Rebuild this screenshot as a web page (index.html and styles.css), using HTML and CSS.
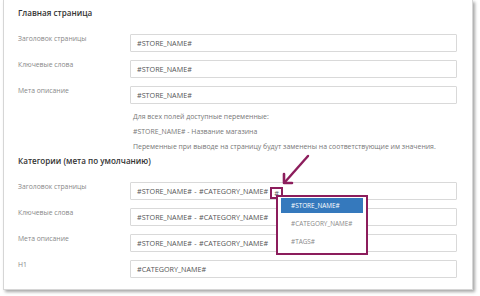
FILE: index.html
```html
<!DOCTYPE html>
<html lang="ru">
<head>
  <meta charset="UTF-8">
  <title>SEO</title>
  <link rel="stylesheet" href="styles.css">
</head>
<body>
  <div class="page">
    <div class="card">
      <h2 class="section-title">Главная страница</h2>
      <div class="fields">
        <div class="row">
          <label class="label">Заголовок страницы</label>
          <div class="input">#STORE_NAME#</div>
        </div>
        <div class="row">
          <label class="label">Ключевые слова</label>
          <div class="input">#STORE_NAME#</div>
        </div>
        <div class="row">
          <label class="label">Мета описание</label>
          <div class="input">#STORE_NAME#</div>
        </div>
      </div>
      <div class="help">
        <p>Для всех полей доступные переменные:</p>
        <p>#STORE_NAME# - Название магазина</p>
        <p>Переменные при выводе на страницу будут заменены на соответствующие им значения.</p>
      </div>

      <h2 class="section-title">Категории (мета по умолчанию)</h2>
      <div class="fields">
        <div class="row">
          <label class="label">Заголовок страницы</label>
          <div class="input active">#STORE_NAME# - #CATEGORY_NAME#<span class="caret-mark">#</span>
            <ul class="suggest">
              <li class="selected">#STORE_NAME#</li>
              <li>#CATEGORY_NAME#</li>
              <li>#TAGS#</li>
            </ul>
          </div>
        </div>
        <div class="row">
          <label class="label">Ключевые слова</label>
          <div class="input">#STORE_NAME# - #CATEGORY_NAME#</div>
        </div>
        <div class="row">
          <label class="label">Мета описание</label>
          <div class="input">#STORE_NAME# - #CATEGORY_NAME#</div>
        </div>
        <div class="row">
          <label class="label">H1</label>
          <div class="input">#CATEGORY_NAME#</div>
        </div>
      </div>
    </div>

    <svg class="pointer" width="50" height="45" viewBox="0 0 50 45">
      <line x1="38" y1="6" x2="15" y2="32" stroke="#8c1d5c" stroke-width="2.4" stroke-linecap="round"/>
      <polyline points="14,24 14,33 22,33" fill="none" stroke="#8c1d5c" stroke-width="2.6" stroke-linecap="round" stroke-linejoin="round"/>
    </svg>
  </div>
</body>
</html>
```

FILE: styles.css
```css
body {
  margin: 0;
  background: #fff;
  font-family: "Open Sans", "Liberation Sans", sans-serif;
  color: #333;
}
.page {
  position: relative;
  width: 480px;
  height: 296px;
  overflow: hidden;
}
.card {
  margin-left: 3px;
  width: 470px;
  height: 290px;
  box-sizing: border-box;
  background: #fff;
  border: 1px solid #d6d6d6;
  border-top: none;
  box-shadow: 2px 2px 3px rgba(0, 0, 0, 0.35);
  padding: 6px 0 0 14px;
}
.section-title {
  margin: 0;
  font-size: 8.1px;
  line-height: 14px;
  font-weight: 600;
  color: #333;
}
.fields {
  display: flex;
  flex-direction: column;
  gap: 8px;
  margin-top: 14px;
}
.row {
  display: flex;
  align-items: flex-start;
}
.label {
  width: 112px;
  flex-shrink: 0;
  font-size: 6.8px;
  line-height: 10px;
  color: #888;
}
.input {
  position: relative;
  width: 327px;
  height: 18px;
  box-sizing: border-box;
  border: 1px solid #d9d9d9;
  border-radius: 1px;
  padding-left: 6px;
  font-size: 7.2px;
  line-height: 16px;
  color: #555;
  word-spacing: 0.6px;
}
.caret-mark {
  display: inline-block;
  margin-left: 2px;
  padding: 0 2px;
  line-height: 8px;
  border: 2px solid #8c1d5c;
  vertical-align: -2px;
}
.suggest {
  position: absolute;
  z-index: 2;
  left: 145px;
  top: 12px;
  width: 92px;
  height: 60px;
  box-sizing: border-box;
  margin: 0;
  padding: 1px 3px;
  list-style: none;
  background: #fff;
  border: 2px solid #8c1d5c;
  display: flex;
  flex-direction: column;
  gap: 3px;
}
.suggest li {
  height: 15px;
  line-height: 15px;
  padding-left: 10px;
  font-size: 6.4px;
  color: #888;
}
.suggest li.selected {
  background: #3579bd;
  color: #fff;
}
.help {
  margin: 5px 0 0 115px;
  font-size: 6.9px;
  line-height: 15px;
  color: #777;
}
.help p {
  margin: 0;
}
.pointer {
  position: absolute;
  left: 270px;
  top: 150px;
}
```
